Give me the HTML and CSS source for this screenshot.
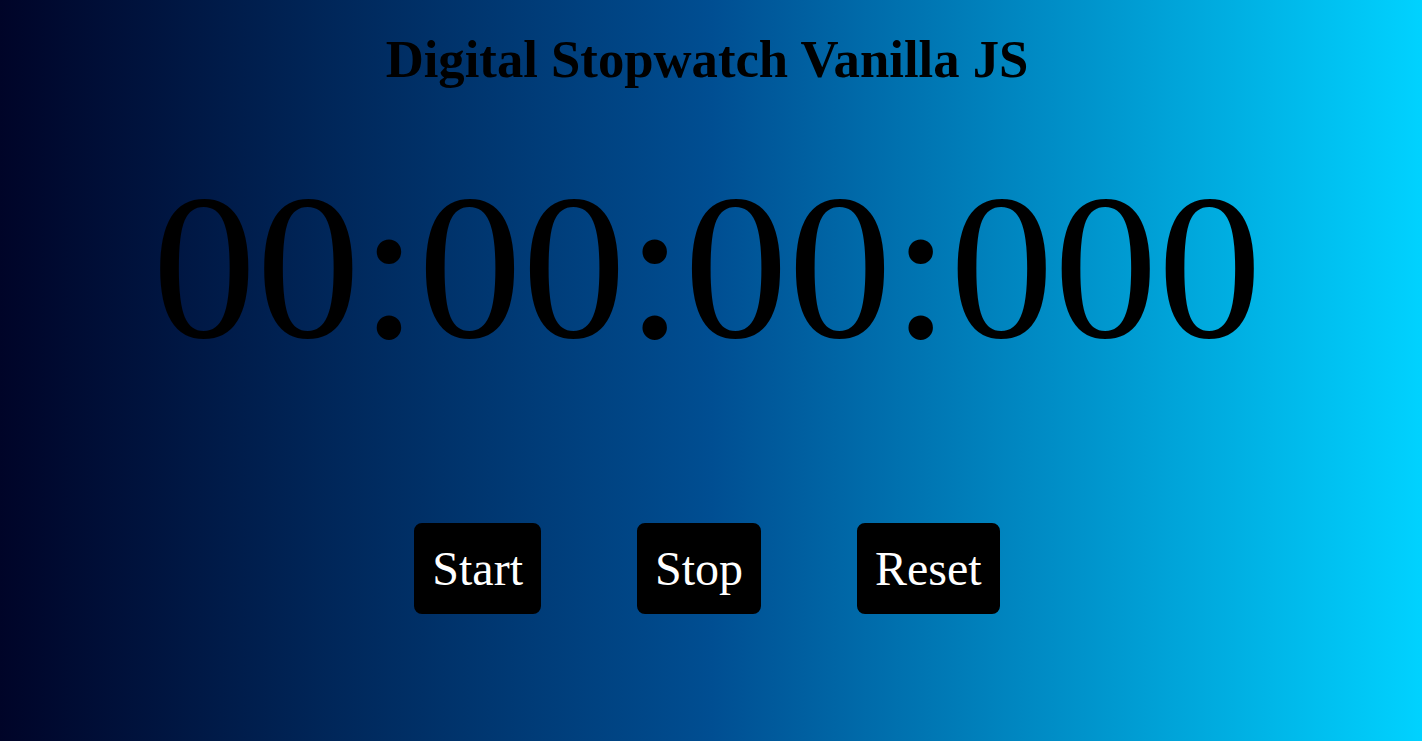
FILE: index.html
```html
<!DOCTYPE html>
<html lang="en">
<head>
<meta charset="UTF-8">
<title>Digital Stopwatch Vanilla JS</title>
<link rel="stylesheet" href="styles.css">
</head>
<body>
<main class="app">
  <h1 class="title">Digital Stopwatch Vanilla JS</h1>
  <div class="time">00:00:00:000</div>
  <div class="controls">
    <button class="btn">Start</button>
    <button class="btn">Stop</button>
    <button class="btn">Reset</button>
  </div>
</main>
</body>
</html>
```

FILE: styles.css
```css
html, body {
  margin: 0;
  height: 100%;
}
body {
  background: linear-gradient(to right, #000428 0%, #004e92 50%, #00d2ff 100%);
  font-family: "Liberation Serif", "Times New Roman", serif;
  color: #000;
}
.app {
  display: flex;
  flex-direction: column;
  align-items: center;
  padding: 29px 8px 0 0;
}
.title {
  margin: 0;
  font-size: 52.7px;
  font-weight: bold;
  line-height: normal;
}
.time {
  margin-top: 59px;
  font-size: 208px;
  line-height: normal;
}
.controls {
  margin-top: 136px;
  display: flex;
  gap: 96px;
}
.btn {
  font-family: "Liberation Serif", "Times New Roman", serif;
  font-size: 48px;
  line-height: normal;
  color: #fff;
  background: #000;
  border: 2px solid #000;
  border-radius: 8px;
  padding: 16px;
  cursor: pointer;
}
```
